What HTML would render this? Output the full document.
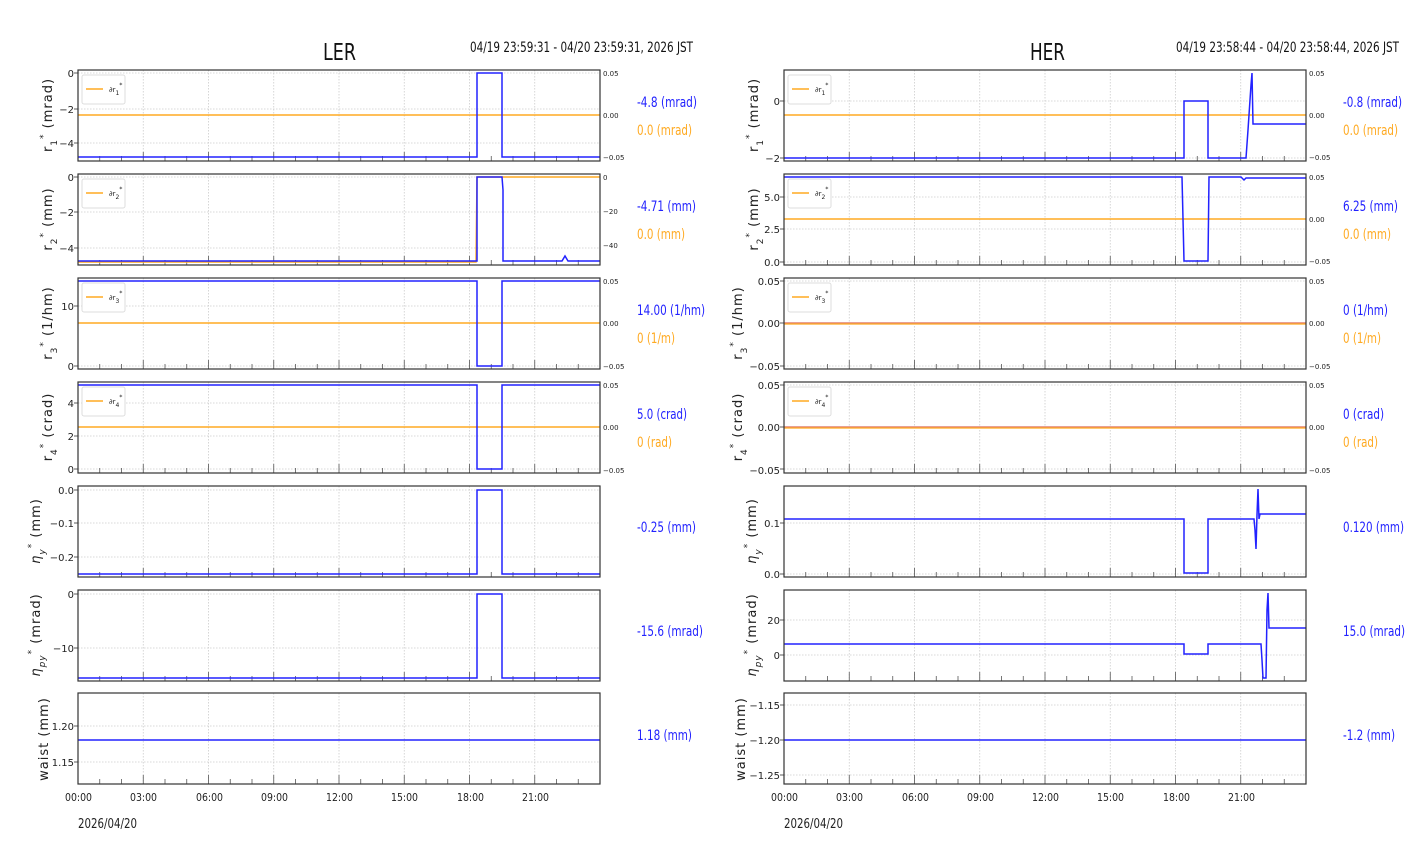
<!DOCTYPE html>
<html><head><meta charset="utf-8"><style>
html,body{margin:0;padding:0;background:#fff;width:1412px;height:864px;overflow:hidden}
svg{display:block}
.t{font-family:"DejaVu Sans","Liberation Sans",sans-serif;font-size:10px;fill:#222}
.s{font-family:"DejaVu Sans","Liberation Sans",sans-serif;font-size:7px;fill:#222}
.yl{font-family:"DejaVu Sans","Liberation Sans",sans-serif;font-size:13px;fill:#222}
.v{font-family:"DejaVu Sans","Liberation Sans",sans-serif;font-size:14px}
.b{fill:#2222ff}.o{fill:#ffaa22}
.ti{font-family:"DejaVu Sans","Liberation Sans",sans-serif;font-size:23px;fill:#111}
.hd{font-family:"DejaVu Sans","Liberation Sans",sans-serif;font-size:14px;fill:#111}
</style></head><body>
<svg id="s" width="1412" height="864" xmlns="http://www.w3.org/2000/svg">
<g id="g"></g>
<text class="ti" x="323" y="60" textLength="33" lengthAdjust="spacingAndGlyphs">LER</text>
<text class="hd" x="470" y="52" textLength="223" lengthAdjust="spacingAndGlyphs">04/19 23:59:31 - 04/20 23:59:31, 2026 JST</text>
<text class="ti" x="1030" y="60" textLength="35" lengthAdjust="spacingAndGlyphs">HER</text>
<text class="hd" x="1176" y="52" textLength="223" lengthAdjust="spacingAndGlyphs">04/19 23:58:44 - 04/20 23:58:44, 2026 JST</text>

<g class="t" text-anchor="end">
<text x="74" y="77">0</text><text x="74" y="113">−2</text><text x="74" y="147">−4</text>
<text x="74" y="181">0</text><text x="74" y="216">−2</text><text x="74" y="252">−4</text>
<text x="74" y="310">10</text><text x="74" y="370">0</text>
<text x="74" y="407">4</text><text x="74" y="440">2</text><text x="74" y="473">0</text>
<text x="74" y="494">0.0</text><text x="74" y="527">−0.1</text><text x="74" y="561">−0.2</text>
<text x="74" y="598">0</text><text x="74" y="652">−10</text>
<text x="74" y="730">1.20</text><text x="74" y="766">1.15</text>
</g>
<g class="s">
<text x="603" y="76">0.05</text><text x="603" y="118">0.00</text><text x="603" y="160">−0.05</text>
<text x="603" y="180">0</text><text x="603" y="214">−20</text><text x="603" y="248">−40</text>
<text x="603" y="284">0.05</text><text x="603" y="326">0.00</text><text x="603" y="369">−0.05</text>
<text x="603" y="388">0.05</text><text x="603" y="430">0.00</text><text x="603" y="473">−0.05</text>
</g>
<g class="t" text-anchor="end">
<text x="780" y="105">0</text><text x="780" y="162">−2</text>
<text x="780" y="201">5.0</text><text x="780" y="233">2.5</text><text x="780" y="266">0.0</text>
<text x="780" y="285">0.05</text><text x="780" y="327">0.00</text><text x="780" y="370">−0.05</text>
<text x="780" y="389">0.05</text><text x="780" y="431">0.00</text><text x="780" y="474">−0.05</text>
<text x="780" y="527">0.1</text><text x="780" y="578">0.0</text>
<text x="780" y="624">20</text><text x="780" y="659">0</text>
<text x="780" y="709">−1.15</text><text x="780" y="744">−1.20</text><text x="780" y="779">−1.25</text>
</g>
<g class="s">
<text x="1309" y="76">0.05</text><text x="1309" y="118">0.00</text><text x="1309" y="160">−0.05</text>
<text x="1309" y="180">0.05</text><text x="1309" y="222">0.00</text><text x="1309" y="264">−0.05</text>
<text x="1309" y="284">0.05</text><text x="1309" y="326">0.00</text><text x="1309" y="369">−0.05</text>
<text x="1309" y="388">0.05</text><text x="1309" y="430">0.00</text><text x="1309" y="473">−0.05</text>
</g>

<g class="yl" text-anchor="middle" letter-spacing="1">
<text transform="translate(52,115) rotate(-90)">r<tspan dy="5" font-size="9">1</tspan><tspan dy="-11" font-size="9">*</tspan><tspan dy="6"> (mrad)</tspan></text>
<text transform="translate(52,219) rotate(-90)">r<tspan dy="5" font-size="9">2</tspan><tspan dy="-11" font-size="9">*</tspan><tspan dy="6"> (mm)</tspan></text>
<text transform="translate(52,323) rotate(-90)">r<tspan dy="5" font-size="9">3</tspan><tspan dy="-11" font-size="9">*</tspan><tspan dy="6"> (1/hm)</tspan></text>
<text transform="translate(52,427) rotate(-90)">r<tspan dy="5" font-size="9">4</tspan><tspan dy="-11" font-size="9">*</tspan><tspan dy="6"> (crad)</tspan></text>
<text transform="translate(40,531) rotate(-90)"><tspan font-style="italic">η</tspan><tspan dy="5" font-size="9" font-style="italic">y</tspan><tspan dy="-11" font-size="9">*</tspan><tspan dy="6"> (mm)</tspan></text>
<text transform="translate(40,635) rotate(-90)"><tspan font-style="italic">η</tspan><tspan dy="5" font-size="9" font-style="italic">py</tspan><tspan dy="-11" font-size="9">*</tspan><tspan dy="6"> (mrad)</tspan></text>
<text transform="translate(48,739) rotate(-90)">waist (mm)</text>

<text transform="translate(758,115) rotate(-90)">r<tspan dy="5" font-size="9">1</tspan><tspan dy="-11" font-size="9">*</tspan><tspan dy="6"> (mrad)</tspan></text>
<text transform="translate(758,219) rotate(-90)">r<tspan dy="5" font-size="9">2</tspan><tspan dy="-11" font-size="9">*</tspan><tspan dy="6"> (mm)</tspan></text>
<text transform="translate(742,323) rotate(-90)">r<tspan dy="5" font-size="9">3</tspan><tspan dy="-11" font-size="9">*</tspan><tspan dy="6"> (1/hm)</tspan></text>
<text transform="translate(742,427) rotate(-90)">r<tspan dy="5" font-size="9">4</tspan><tspan dy="-11" font-size="9">*</tspan><tspan dy="6"> (crad)</tspan></text>
<text transform="translate(756,531) rotate(-90)"><tspan font-style="italic">η</tspan><tspan dy="5" font-size="9" font-style="italic">y</tspan><tspan dy="-11" font-size="9">*</tspan><tspan dy="6"> (mm)</tspan></text>
<text transform="translate(756,635) rotate(-90)"><tspan font-style="italic">η</tspan><tspan dy="5" font-size="9" font-style="italic">py</tspan><tspan dy="-11" font-size="9">*</tspan><tspan dy="6"> (mrad)</tspan></text>
<text transform="translate(745,739) rotate(-90)">waist (mm)</text>
</g>

<g id="leg"></g>
<g class="s">
<text x="109" y="92">∂r<tspan dy="3" font-size="6">1</tspan><tspan dy="-8" font-size="6">*</tspan></text>
<text x="109" y="196">∂r<tspan dy="3" font-size="6">2</tspan><tspan dy="-8" font-size="6">*</tspan></text>
<text x="109" y="300">∂r<tspan dy="3" font-size="6">3</tspan><tspan dy="-8" font-size="6">*</tspan></text>
<text x="109" y="404">∂r<tspan dy="3" font-size="6">4</tspan><tspan dy="-8" font-size="6">*</tspan></text>
<text x="815" y="92">∂r<tspan dy="3" font-size="6">1</tspan><tspan dy="-8" font-size="6">*</tspan></text>
<text x="815" y="196">∂r<tspan dy="3" font-size="6">2</tspan><tspan dy="-8" font-size="6">*</tspan></text>
<text x="815" y="300">∂r<tspan dy="3" font-size="6">3</tspan><tspan dy="-8" font-size="6">*</tspan></text>
<text x="815" y="404">∂r<tspan dy="3" font-size="6">4</tspan><tspan dy="-8" font-size="6">*</tspan></text>
</g>

<g class="v" lengthAdjust="spacingAndGlyphs">
<text class="b" x="637" y="107" textLength="60" lengthAdjust="spacingAndGlyphs">-4.8 (mrad)</text><text class="o" x="637" y="135" textLength="55" lengthAdjust="spacingAndGlyphs">0.0 (mrad)</text>
<text class="b" x="637" y="211" textLength="59" lengthAdjust="spacingAndGlyphs">-4.71 (mm)</text><text class="o" x="637" y="239" textLength="48" lengthAdjust="spacingAndGlyphs">0.0 (mm)</text>
<text class="b" x="637" y="315" textLength="68" lengthAdjust="spacingAndGlyphs">14.00 (1/hm)</text><text class="o" x="637" y="343" textLength="38" lengthAdjust="spacingAndGlyphs">0 (1/m)</text>
<text class="b" x="637" y="419" textLength="50" lengthAdjust="spacingAndGlyphs">5.0 (crad)</text><text class="o" x="637" y="447" textLength="35" lengthAdjust="spacingAndGlyphs">0 (rad)</text>
<text class="b" x="637" y="532" textLength="59" lengthAdjust="spacingAndGlyphs">-0.25 (mm)</text>
<text class="b" x="637" y="636" textLength="66" lengthAdjust="spacingAndGlyphs">-15.6 (mrad)</text>
<text class="b" x="637" y="740" textLength="55" lengthAdjust="spacingAndGlyphs">1.18 (mm)</text>
<text class="b" x="1343" y="107" textLength="59" lengthAdjust="spacingAndGlyphs">-0.8 (mrad)</text><text class="o" x="1343" y="135" textLength="55" lengthAdjust="spacingAndGlyphs">0.0 (mrad)</text>
<text class="b" x="1343" y="211" textLength="55" lengthAdjust="spacingAndGlyphs">6.25 (mm)</text><text class="o" x="1343" y="239" textLength="48" lengthAdjust="spacingAndGlyphs">0.0 (mm)</text>
<text class="b" x="1343" y="315" textLength="45" lengthAdjust="spacingAndGlyphs">0 (1/hm)</text><text class="o" x="1343" y="343" textLength="38" lengthAdjust="spacingAndGlyphs">0 (1/m)</text>
<text class="b" x="1343" y="419" textLength="41" lengthAdjust="spacingAndGlyphs">0 (crad)</text><text class="o" x="1343" y="447" textLength="35" lengthAdjust="spacingAndGlyphs">0 (rad)</text>
<text class="b" x="1343" y="532" textLength="61" lengthAdjust="spacingAndGlyphs">0.120 (mm)</text>
<text class="b" x="1343" y="636" textLength="62" lengthAdjust="spacingAndGlyphs">15.0 (mrad)</text>
<text class="b" x="1343" y="740" textLength="52" lengthAdjust="spacingAndGlyphs">-1.2 (mm)</text>
</g>

<g class="t" style="font-size:11px">
<text x="65" y="801" textLength="27" lengthAdjust="spacingAndGlyphs">00:00</text><text x="130" y="801" textLength="27" lengthAdjust="spacingAndGlyphs">03:00</text><text x="196" y="801" textLength="27" lengthAdjust="spacingAndGlyphs">06:00</text><text x="261" y="801" textLength="27" lengthAdjust="spacingAndGlyphs">09:00</text><text x="326" y="801" textLength="27" lengthAdjust="spacingAndGlyphs">12:00</text><text x="391" y="801" textLength="27" lengthAdjust="spacingAndGlyphs">15:00</text><text x="457" y="801" textLength="27" lengthAdjust="spacingAndGlyphs">18:00</text><text x="522" y="801" textLength="27" lengthAdjust="spacingAndGlyphs">21:00</text>
<text x="771" y="801" textLength="27" lengthAdjust="spacingAndGlyphs">00:00</text><text x="836" y="801" textLength="27" lengthAdjust="spacingAndGlyphs">03:00</text><text x="902" y="801" textLength="27" lengthAdjust="spacingAndGlyphs">06:00</text><text x="967" y="801" textLength="27" lengthAdjust="spacingAndGlyphs">09:00</text><text x="1032" y="801" textLength="27" lengthAdjust="spacingAndGlyphs">12:00</text><text x="1097" y="801" textLength="27" lengthAdjust="spacingAndGlyphs">15:00</text><text x="1163" y="801" textLength="27" lengthAdjust="spacingAndGlyphs">18:00</text><text x="1228" y="801" textLength="27" lengthAdjust="spacingAndGlyphs">21:00</text>
</g>
<text class="t" x="78" y="828" style="font-size:13px" textLength="59" lengthAdjust="spacingAndGlyphs">2026/04/20</text>
<text class="t" x="784" y="828" style="font-size:13px" textLength="59" lengthAdjust="spacingAndGlyphs">2026/04/20</text>
</svg>
<script>
var NS="http://www.w3.org/2000/svg",g=document.getElementById('g');
function el(t,a){var e=document.createElementNS(NS,t);for(var k in a)e.setAttribute(k,a[k]);g.appendChild(e);return e;}
var tops=[70,174,278,382,486,590,693],H=91,W=522;
var gridY=[[73,109,143],[177,212,248],[306,366],[403,436,469],[490,523,557],[594,648],[726,762]];
var gridYR=[[101,158],[197,229,262],[281,323,366],[385,427,469],[523,574],[620,655],[705,740,775]];
function panel(x0,i,gy){
 var t=tops[i];
 for(var h=3;h<24;h+=3){var x=x0+W*h/24;el('line',{x1:x,y1:t,x2:x,y2:t+H,stroke:'#ccc','stroke-width':0.8,'stroke-dasharray':'1.5,1.5'});}
 gy.forEach(function(y){el('line',{x1:x0,y1:y,x2:x0+W,y2:y,stroke:'#ccc','stroke-width':0.8,'stroke-dasharray':'1.5,1.5'});el('line',{x1:x0-4,y1:y,x2:x0,y2:y,stroke:'#333','stroke-width':0.8});});
 for(var h=1;h<24;h++){var x=x0+W*h/24;el('line',{x1:x,y1:t+H,x2:x,y2:t+H-(h%3?5:9),stroke:'#555','stroke-width':0.8});}
}
function rect(x0,i){var t=tops[i];el('rect',{x:x0,y:t,width:W,height:H,fill:'none',stroke:'#333','stroke-width':1.2});}
function pl(pts,c,w){el('polyline',{points:pts.map(function(p){return p.join(',')}).join(' '),fill:'none',stroke:c,'stroke-width':w||1.5});}
var B='#2222ff',O='#ffaa22';
for(var i=0;i<7;i++){panel(78,i,gridY[i]);panel(784,i,gridYR[i]);}
pl([[78,115],[600,115]],O);
pl([[78,157],[477,157],[477,73],[502,73],[502,157],[600,157]],B);
pl([[78,262],[476,262],[477,177],[600,177]],O);
pl([[78,261],[477,261],[477,177],[502,177],[503,190],[503,261],[562,261],[565,256],[568,261],[600,261]],B);
pl([[78,323],[600,323]],O);
pl([[78,281],[477,281],[477,366],[502,366],[502,281],[600,281]],B);
pl([[78,427],[600,427]],O);
pl([[78,385],[477,385],[477,469],[502,469],[502,385],[600,385]],B);
pl([[78,574],[477,574],[477,490],[502,490],[502,574],[600,574]],B);
pl([[78,678],[477,678],[477,594],[502,594],[502,678],[600,678]],B);
pl([[78,740],[600,740]],B);
pl([[784,115],[1306,115]],O);
pl([[784,158],[1184,158],[1184,101],[1208,101],[1208,158],[1246,158],[1248,130],[1250,100],[1251,85],[1252,73],[1253,124],[1306,124]],B);
pl([[784,219],[1306,219]],O);
pl([[784,177],[1182,177],[1184,261],[1208,261],[1209,177],[1241,177],[1244,180],[1246,178],[1306,178]],B);
pl([[784,323],[1306,323]],'#e08070');pl([[784,324],[1306,324]],O,1.2);
pl([[784,427],[1306,427]],'#e08070');pl([[784,428],[1306,428]],O,1.2);
pl([[784,519],[1184,519],[1184,573],[1208,573],[1208,519],[1254,519],[1255,530],[1256,549],[1257,515],[1258,489],[1259,519],[1260,514],[1306,514]],B);
pl([[784,644],[1184,644],[1184,654],[1208,654],[1208,644],[1261,644],[1262,660],[1263,678],[1266,678],[1267,610],[1268,593],[1269,628],[1306,628]],B);
pl([[784,740],[1306,740]],B);
for(var i=0;i<7;i++){rect(78,i);rect(784,i);}
[0,1,2,3].forEach(function(i){[78,784].forEach(function(x0){var t=tops[i];
 el('rect',{x:x0+4,y:t+5,width:43,height:29,rx:2,fill:'#fff',stroke:'#ddd','stroke-width':1});
 el('line',{x1:x0+8,y1:t+19,x2:x0+25,y2:t+19,stroke:O,'stroke-width':1.5});});});
</script>
</body></html>
